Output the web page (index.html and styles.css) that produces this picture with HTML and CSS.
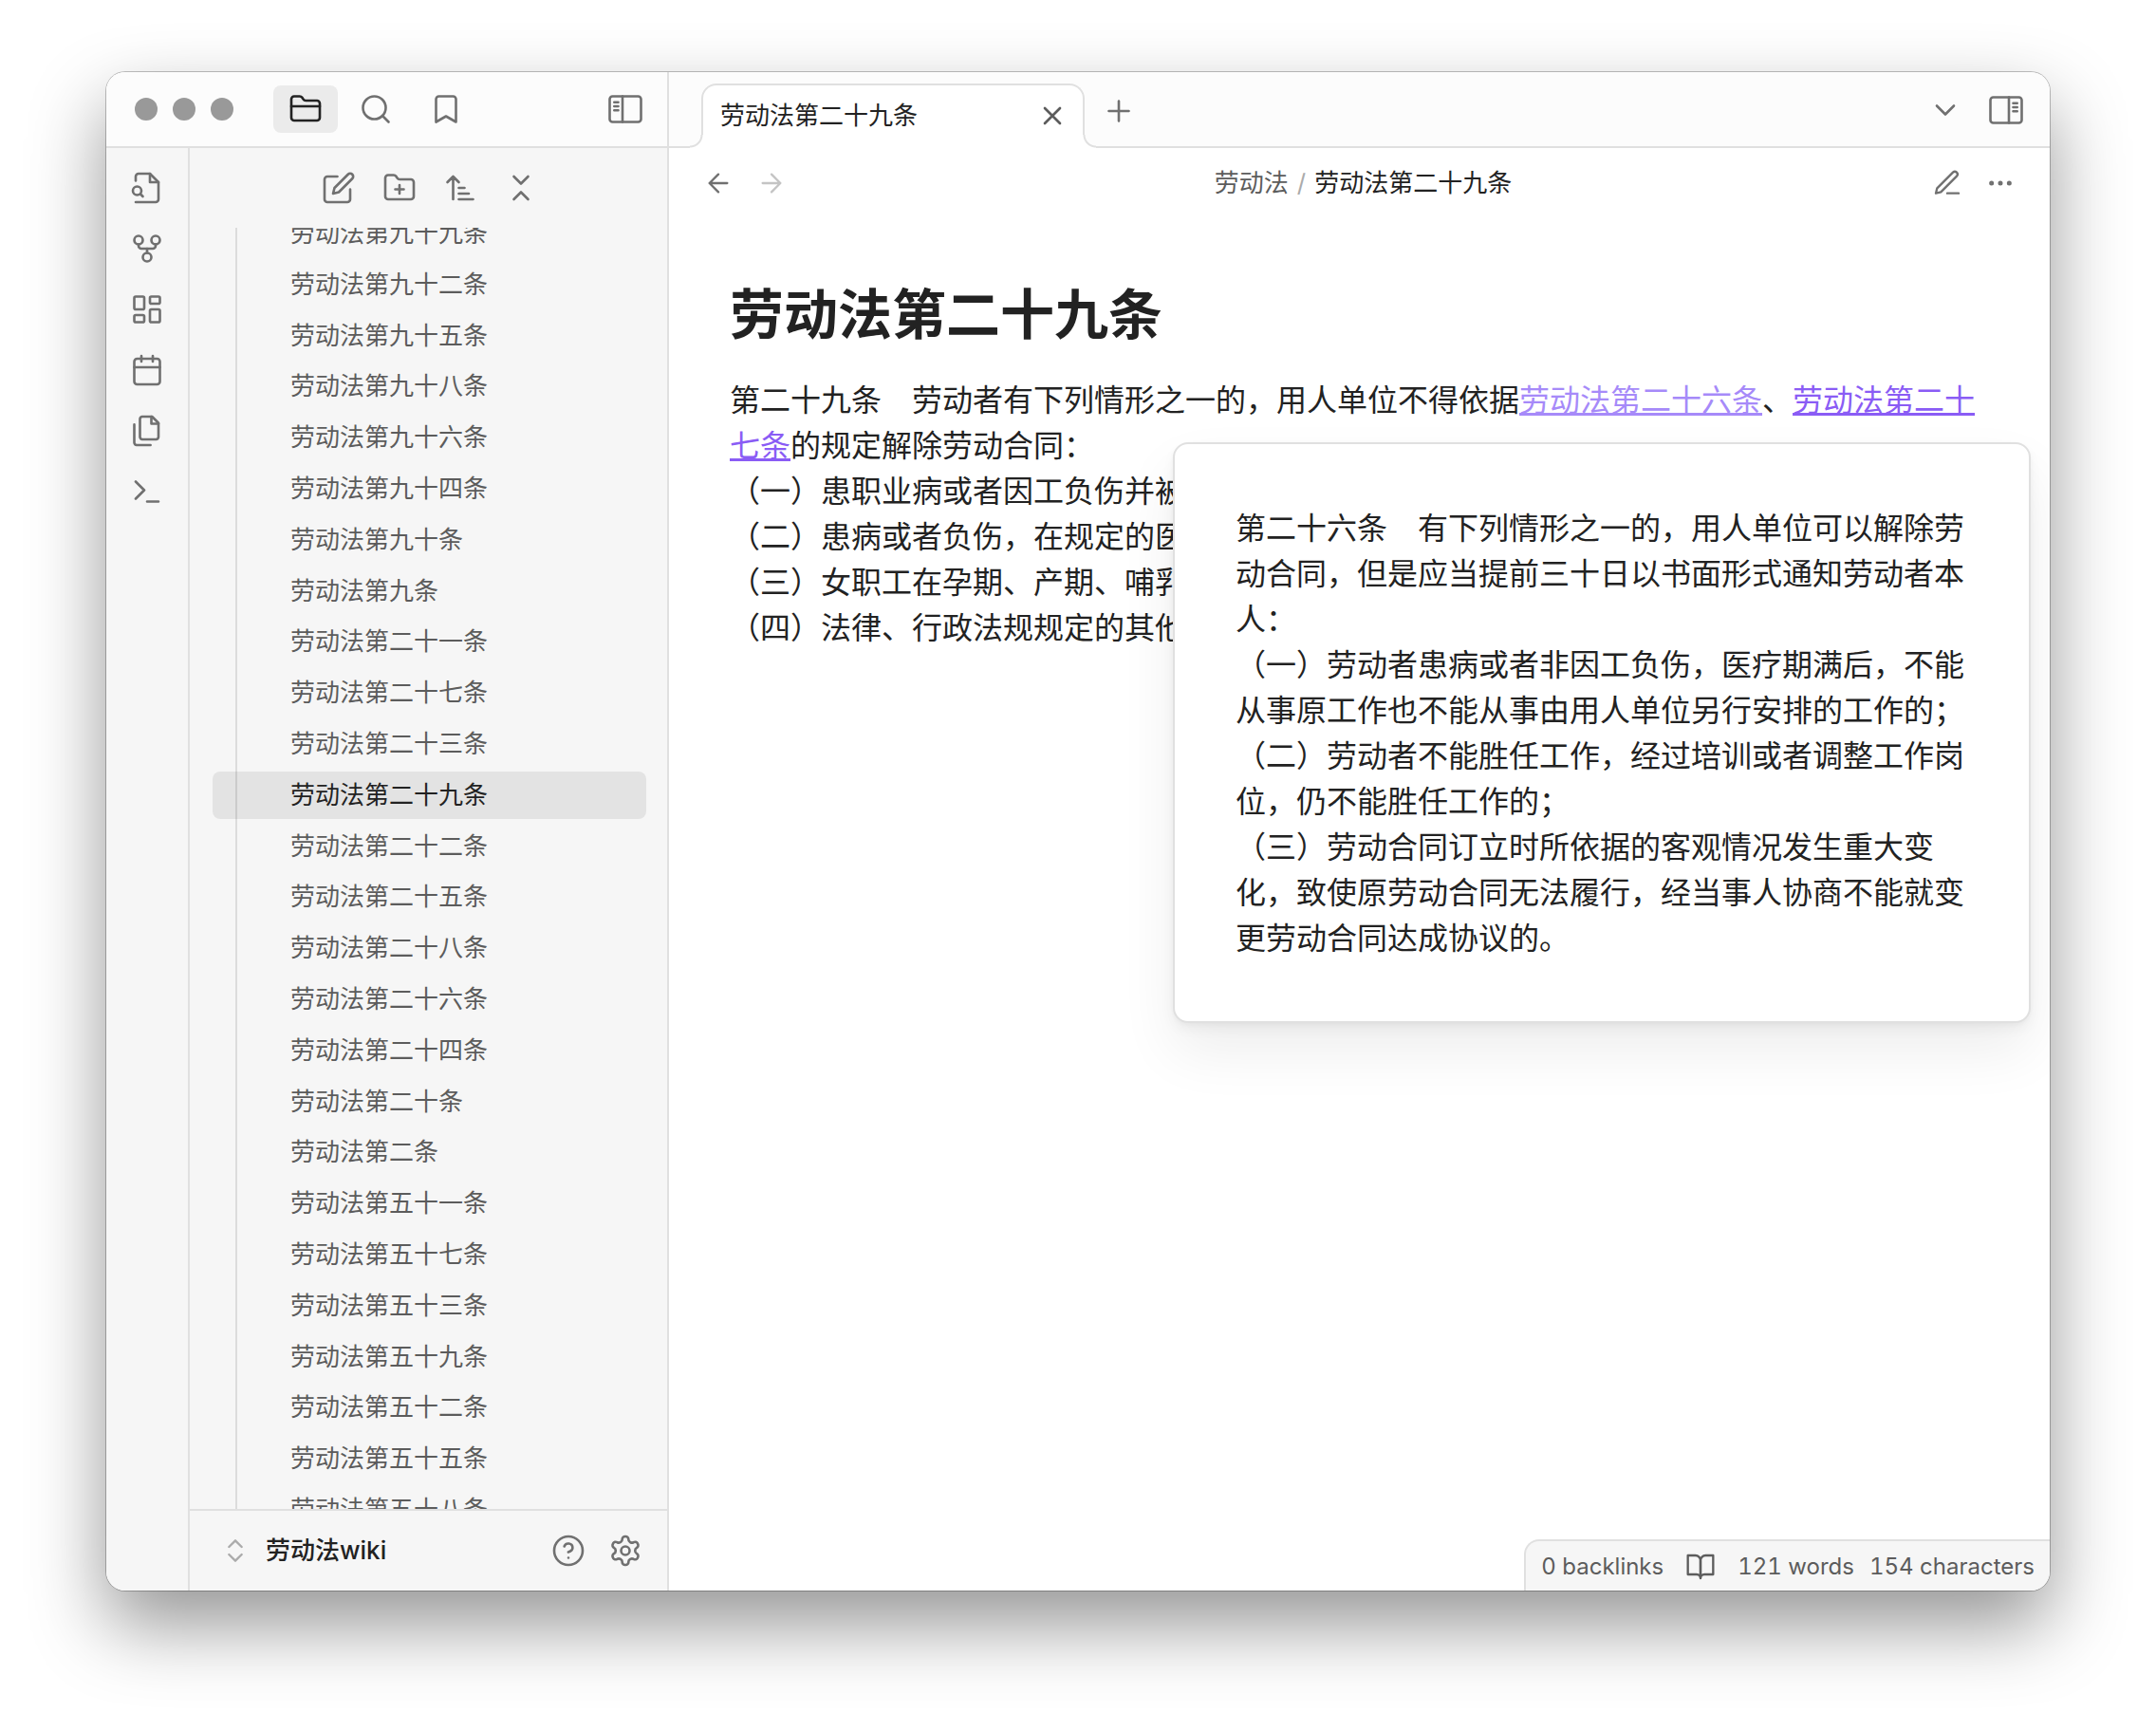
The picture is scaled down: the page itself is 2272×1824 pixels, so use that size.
FILE: index.html
```html
<!DOCTYPE html>
<html lang="zh-CN">
<head>
<meta charset="utf-8">
<title>劳动法第二十九条 - 劳动法wiki</title>
<link rel="stylesheet" href="styles.css">
</head>
<body>
<svg class="icon-defs" aria-hidden="true">
  <symbol id="i-folder" viewBox="0 0 24 24"><path d="M20 20a2 2 0 0 0 2-2V8a2 2 0 0 0-2-2h-7.9a2 2 0 0 1-1.69-.9L9.6 3.9A2 2 0 0 0 7.93 3H4a2 2 0 0 0-2 2v13a2 2 0 0 0 2 2Z"/><path d="M2 10h20"/></symbol>
  <symbol id="i-search" viewBox="0 0 24 24"><circle cx="11" cy="11" r="8"/><path d="m21 21-4.3-4.3"/></symbol>
  <symbol id="i-bookmark" viewBox="0 0 24 24"><path d="m19 21-7-4-7 4V5a2 2 0 0 1 2-2h10a2 2 0 0 1 2 2v16z"/></symbol>
  <symbol id="i-sidebar-left" viewBox="0 0 24 24"><rect x="1" y="3" width="22" height="18" rx="2"/><path d="M10 3v18M4.2 7.2h2.8M4.2 10h2.8M4.2 12.8h2.8"/></symbol>
  <symbol id="i-sidebar-right" viewBox="0 0 24 24"><rect x="1" y="3" width="22" height="18" rx="2"/><path d="M14 3v18M17 7.2h2.8M17 10h2.8M17 12.8h2.8"/></symbol>
  <symbol id="i-file-search" viewBox="0 0 24 24"><path d="M4 7V4a2 2 0 0 1 2-2h8l6 6v12a2 2 0 0 1-2 2H4"/><path d="M14 2v6h6"/><circle cx="5" cy="14" r="3"/><path d="m9 18-1.5-1.5"/></symbol>
  <symbol id="i-fork" viewBox="0 0 24 24"><circle cx="12" cy="18" r="3"/><circle cx="6" cy="6" r="3"/><circle cx="18" cy="6" r="3"/><path d="M18 9v1a2 2 0 0 1-2 2H8a2 2 0 0 1-2-2V9"/><path d="M12 12v3"/></symbol>
  <symbol id="i-dashboard" viewBox="0 0 24 24"><rect x="3" y="3" width="7" height="9" rx="1"/><rect x="14" y="3" width="7" height="5" rx="1"/><rect x="14" y="12" width="7" height="9" rx="1"/><rect x="3" y="16" width="7" height="5" rx="1"/></symbol>
  <symbol id="i-calendar" viewBox="0 0 24 24"><rect x="3" y="4" width="18" height="18" rx="2"/><path d="M16 2v4M8 2v4M3 10h18"/></symbol>
  <symbol id="i-files" viewBox="0 0 24 24"><path d="M15.5 2H8.6c-.4 0-.8.2-1.1.5-.3.3-.5.7-.5 1.1v12.8c0 .4.2.8.5 1.1.3.3.7.5 1.1.5h9.8c.4 0 .8-.2 1.1-.5.3-.3.5-.7.5-1.1V6.5L15.5 2z"/><path d="M3 7.6v12.8c0 .4.2.8.5 1.1.3.3.7.5 1.1.5h9.8"/><path d="M15 2v5h5"/></symbol>
  <symbol id="i-terminal" viewBox="0 0 24 24"><path d="m4 17 6-6-6-6M12 19h8"/></symbol>
  <symbol id="i-new-note" viewBox="0 0 24 24"><path d="M11 4H4a2 2 0 0 0-2 2v14a2 2 0 0 0 2 2h14a2 2 0 0 0 2-2v-7"/><path d="M18.5 2.5a2.12 2.12 0 0 1 3 3L12 15l-4 1 1-4Z"/></symbol>
  <symbol id="i-new-folder" viewBox="0 0 24 24"><path d="M4 20h16a2 2 0 0 0 2-2V8a2 2 0 0 0-2-2h-7.93a2 2 0 0 1-1.66-.9l-.82-1.2A2 2 0 0 0 7.93 3H4a2 2 0 0 0-2 2v13c0 1.1.9 2 2 2Z"/><path d="M12 10v6M9 13h6"/></symbol>
  <symbol id="i-sort" viewBox="0 0 24 24"><path d="m3 8 4-4 4 4M7 4v16M11 12h4M11 16h7M11 20h10"/></symbol>
  <symbol id="i-collapse" viewBox="0 0 24 24"><path d="m7 20 5-5 5 5M7 4l5 5 5-5"/></symbol>
  <symbol id="i-up-down" viewBox="0 0 24 24"><path d="m7 15 5 5 5-5M7 9l5-5 5 5"/></symbol>
  <symbol id="i-help" viewBox="0 0 24 24"><circle cx="12" cy="12" r="10"/><path d="M9.09 9a3 3 0 0 1 5.83 1c0 2-3 3-3 3M12 17h.01"/></symbol>
  <symbol id="i-settings" viewBox="0 0 24 24"><path d="M12.22 2h-.44a2 2 0 0 0-2 2v.18a2 2 0 0 1-1 1.73l-.43.25a2 2 0 0 1-2 0l-.15-.08a2 2 0 0 0-2.73.73l-.22.38a2 2 0 0 0 .73 2.73l.15.1a2 2 0 0 1 1 1.72v.51a2 2 0 0 1-1 1.74l-.15.09a2 2 0 0 0-.73 2.73l.22.38a2 2 0 0 0 2.73.73l.15-.08a2 2 0 0 1 2 0l.43.25a2 2 0 0 1 1 1.73V20a2 2 0 0 0 2 2h.44a2 2 0 0 0 2-2v-.18a2 2 0 0 1 1-1.73l.43-.25a2 2 0 0 1 2 0l.15.08a2 2 0 0 0 2.73-.73l.22-.39a2 2 0 0 0-.73-2.73l-.15-.08a2 2 0 0 1-1-1.74v-.5a2 2 0 0 1 1-1.74l.15-.09a2 2 0 0 0 .73-2.73l-.22-.38a2 2 0 0 0-2.73-.73l-.15.08a2 2 0 0 1-2 0l-.43-.25a2 2 0 0 1-1-1.73V4a2 2 0 0 0-2-2z"/><circle cx="12" cy="12" r="3"/></symbol>
  <symbol id="i-close" viewBox="0 0 24 24"><path d="M18 6 6 18M6 6l12 12"/></symbol>
  <symbol id="i-plus" viewBox="0 0 24 24"><path d="M5 12h14M12 5v14"/></symbol>
  <symbol id="i-chevron-down" viewBox="0 0 24 24"><path d="m6 9 6 6 6-6"/></symbol>
  <symbol id="i-back" viewBox="0 0 24 24"><path d="m12 19-7-7 7-7M19 12H5"/></symbol>
  <symbol id="i-forward" viewBox="0 0 24 24"><path d="M5 12h14M12 5l7 7-7 7"/></symbol>
  <symbol id="i-pen" viewBox="0 0 24 24"><path d="M12 20h9"/><path d="M16.5 3.5a2.12 2.12 0 0 1 3 3L7 19l-4 1 1-4Z"/></symbol>
  <symbol id="i-more" viewBox="0 0 24 24"><circle cx="12" cy="12" r="1"/><circle cx="19" cy="12" r="1"/><circle cx="5" cy="12" r="1"/></symbol>
  <symbol id="i-book" viewBox="0 0 24 24"><path d="M2 3h6a4 4 0 0 1 4 4v14a3 3 0 0 0-3-3H2z"/><path d="M22 3h-6a4 4 0 0 0-4 4v14a3 3 0 0 1 3-3h7z"/></symbol>
</svg>

<div class="window">
  <aside class="left">
    <header class="left-header">
      <div class="lights"><span></span><span></span><span></span></div>
      <div class="side-tabs">
        <button class="side-tab active" aria-label="文件列表"><svg class="icon"><use href="#i-folder"/></svg></button>
        <button class="side-tab" aria-label="搜索"><svg class="icon"><use href="#i-search"/></svg></button>
        <button class="side-tab" aria-label="书签"><svg class="icon"><use href="#i-bookmark"/></svg></button>
      </div>
      <button class="tool" aria-label="折叠左侧栏"><svg class="icon"><use href="#i-sidebar-left"/></svg></button>
    </header>
    <div class="left-body">
      <nav class="ribbon">
        <button class="tool" aria-label="快速切换"><svg class="icon"><use href="#i-file-search"/></svg></button>
        <button class="tool" aria-label="关系图谱"><svg class="icon"><use href="#i-fork"/></svg></button>
        <button class="tool" aria-label="白板"><svg class="icon"><use href="#i-dashboard"/></svg></button>
        <button class="tool" aria-label="日记"><svg class="icon"><use href="#i-calendar"/></svg></button>
        <button class="tool" aria-label="模板"><svg class="icon"><use href="#i-files"/></svg></button>
        <button class="tool" aria-label="命令面板"><svg class="icon"><use href="#i-terminal"/></svg></button>
      </nav>
      <section class="explorer">
        <div class="explorer-tools">
          <button class="tool" aria-label="新建笔记"><svg class="icon"><use href="#i-new-note"/></svg></button>
          <button class="tool" aria-label="新建文件夹"><svg class="icon"><use href="#i-new-folder"/></svg></button>
          <button class="tool" aria-label="排序"><svg class="icon"><use href="#i-sort"/></svg></button>
          <button class="tool" aria-label="全部折叠"><svg class="icon"><use href="#i-collapse"/></svg></button>
        </div>
        <div class="file-scroll">
          <ul class="files">
            <li><a href="#">劳动法第九十九条</a></li>
            <li><a href="#">劳动法第九十二条</a></li>
            <li><a href="#">劳动法第九十五条</a></li>
            <li><a href="#">劳动法第九十八条</a></li>
            <li><a href="#">劳动法第九十六条</a></li>
            <li><a href="#">劳动法第九十四条</a></li>
            <li><a href="#">劳动法第九十条</a></li>
            <li><a href="#">劳动法第九条</a></li>
            <li><a href="#">劳动法第二十一条</a></li>
            <li><a href="#">劳动法第二十七条</a></li>
            <li><a href="#">劳动法第二十三条</a></li>
            <li><a href="#" class="current">劳动法第二十九条</a></li>
            <li><a href="#">劳动法第二十二条</a></li>
            <li><a href="#">劳动法第二十五条</a></li>
            <li><a href="#">劳动法第二十八条</a></li>
            <li><a href="#">劳动法第二十六条</a></li>
            <li><a href="#">劳动法第二十四条</a></li>
            <li><a href="#">劳动法第二十条</a></li>
            <li><a href="#">劳动法第二条</a></li>
            <li><a href="#">劳动法第五十一条</a></li>
            <li><a href="#">劳动法第五十七条</a></li>
            <li><a href="#">劳动法第五十三条</a></li>
            <li><a href="#">劳动法第五十九条</a></li>
            <li><a href="#">劳动法第五十二条</a></li>
            <li><a href="#">劳动法第五十五条</a></li>
            <li><a href="#">劳动法第五十八条</a></li>
          </ul>
        </div>
        <footer class="vault">
          <button class="vault-name"><svg class="icon small"><use href="#i-up-down"/></svg>劳动法wiki</button>
          <button class="tool" aria-label="帮助"><svg class="icon"><use href="#i-help"/></svg></button>
          <button class="tool" aria-label="设置"><svg class="icon"><use href="#i-settings"/></svg></button>
        </footer>
      </section>
    </div>
  </aside>

  <main class="main">
    <header class="tabs">
      <div class="tab">
        <span class="tab-title">劳动法第二十九条</span>
        <button class="close" aria-label="关闭"><svg class="icon small"><use href="#i-close"/></svg></button>
      </div>
      <button class="tool new-tab" aria-label="新标签页"><svg class="icon"><use href="#i-plus"/></svg></button>
      <div class="tabs-end">
        <button class="tool" aria-label="标签页列表"><svg class="icon"><use href="#i-chevron-down"/></svg></button>
        <button class="tool" aria-label="展开右侧栏"><svg class="icon"><use href="#i-sidebar-right"/></svg></button>
      </div>
    </header>
    <div class="view-header">
      <div class="view-actions">
        <button class="action" aria-label="后退"><svg class="icon small"><use href="#i-back"/></svg></button>
        <button class="action" aria-label="前进" disabled><svg class="icon small"><use href="#i-forward"/></svg></button>
      </div>
      <nav class="crumbs"><a href="#">劳动法</a><span>/</span><strong>劳动法第二十九条</strong></nav>
      <div class="view-actions">
        <button class="action" aria-label="编辑"><svg class="icon small"><use href="#i-pen"/></svg></button>
        <button class="action" aria-label="更多选项"><svg class="icon small"><use href="#i-more"/></svg></button>
      </div>
    </div>
    <article class="note">
      <h1>劳动法第二十九条</h1>
      <p>第二十九条　劳动者有下列情形之一的，用人单位不得依据<a href="#" class="hovered">劳动法第二十六条</a>、<a href="#">劳动法第二十七条</a>的规定解除劳动合同：<br>
      （一）患职业病或者因工负伤并被确认丧失或者部分丧失劳动能力的；<br>
      （二）患病或者负伤，在规定的医疗期内的；<br>
      （三）女职工在孕期、产期、哺乳期内的；<br>
      （四）法律、行政法规规定的其他情形。</p>
    </article>
    <aside class="popover">
      <p>第二十六条　有下列情形之一的，用人单位可以解除劳动合同，但是应当提前三十日以书面形式通知劳动者本人：<br>
      （一）劳动者患病或者非因工负伤，医疗期满后，不能从事原工作也不能从事由用人单位另行安排的工作的；<br>
      （二）劳动者不能胜任工作，经过培训或者调整工作岗位，仍不能胜任工作的；<br>
      （三）劳动合同订立时所依据的客观情况发生重大变化，致使原劳动合同无法履行，经当事人协商不能就变更劳动合同达成协议的。</p>
    </aside>
    <footer class="status">
      <span>0 backlinks</span>
      <button class="status-icon" aria-label="阅读视图"><svg class="icon small"><use href="#i-book"/></svg></button>
      <span>121 words</span>
      <span>154 characters</span>
    </footer>
  </main>
</div>
</body>
</html>
```
FILE: styles.css
```css
* {
  box-sizing: border-box;
}

:root {
  --line: #e0e0e0;
  --bar: #fcfcfc;
  --side: #f6f6f6;
  --text: #222;
  --muted: #5c5c5c;
  --icon: #707070;
  --faint: #ababab;
  --link: #8a5cf5;
  --link-hover: #a68af9;
}

body {
  margin: 0;
  height: 100vh;
  padding: 76px 112px 148px;
  display: flex;
  background: #fff;
  color: var(--text);
  font-family: Inter, "Noto Sans CJK SC", sans-serif;
  font-size: 26px;
  line-height: 34px;
  text-spacing-trim: space-all;
}

.icon-defs {
  position: absolute;
  width: 0;
  height: 0;
}

button {
  margin: 0;
  padding: 0;
  border: 0;
  background: none;
  color: var(--icon);
  font: inherit;
  display: flex;
  align-items: center;
  justify-content: center;
}

a {
  color: inherit;
  text-decoration: none;
}

.icon {
  width: 36px;
  height: 36px;
  flex: none;
  fill: none;
  stroke: currentColor;
  stroke-width: 1.75;
  stroke-linecap: round;
  stroke-linejoin: round;
  overflow: visible;
}

.icon.small {
  width: 32px;
  height: 32px;
}

.tool {
  width: 60px;
  height: 60px;
}

.window {
  flex: 1;
  min-width: 0;
  display: flex;
  overflow: hidden;
  border-radius: 20px;
  background: #fff;
  box-shadow: 0 0 0 1px rgba(0, 0, 0, .24), 0 36px 80px rgba(0, 0, 0, .42);
}

/* left side */

.left {
  flex: none;
  width: 593px;
  display: flex;
  flex-direction: column;
  border-right: 2px solid var(--line);
  background: var(--side);
}

.left-header {
  height: 80px;
  padding: 0 14px 0 30px;
  display: flex;
  align-items: center;
  border-bottom: 2px solid var(--line);
  background: var(--bar);
}

.lights {
  display: flex;
  gap: 16px;
}

.lights span {
  width: 24px;
  height: 24px;
  border-radius: 50%;
  background: #999;
}

.side-tabs {
  flex: 1;
  display: flex;
  gap: 6px;
  padding-left: 42px;
}

.side-tab {
  width: 68px;
  height: 50px;
  border-radius: 8px;
}

.side-tab.active {
  background: #ebebeb;
  color: var(--text);
}

.left-body {
  flex: 1;
  min-height: 0;
  display: flex;
}

.ribbon {
  width: 88px;
  padding-top: 12px;
  display: flex;
  flex-direction: column;
  align-items: center;
  gap: 4px;
  border-right: 2px solid var(--line);
}

.explorer {
  flex: 1;
  min-width: 0;
  display: flex;
  flex-direction: column;
}

.explorer-tools {
  height: 84px;
  padding-left: 2px;
  display: flex;
  align-items: center;
  justify-content: center;
  gap: 4px;
}

.file-scroll {
  flex: 1;
  min-height: 0;
  padding: 0 22px 0 24px;
  display: flex;
  flex-direction: column;
  overflow: hidden;
  background: linear-gradient(#dcdcdc, #dcdcdc) 48px 0 / 2px 100% no-repeat;
}

/* the list is scrolled a little, so both its ends run out of the box */
.files {
  flex: 1 0 auto;
  margin: -19px 0 -26px;
  padding: 0;
  display: flex;
  flex-direction: column;
  justify-content: space-between;
  list-style: none;
}

.files a {
  display: block;
  padding: 8px 16px 8px 82px;
  border-radius: 8px;
  color: var(--muted);
}

.files .current {
  background: rgba(0, 0, 0, .075);
  color: var(--text);
}

.vault {
  height: 86px;
  padding: 0 14px 0 32px;
  display: flex;
  align-items: center;
  border-top: 2px solid var(--line);
}

.vault-name {
  flex: 1;
  justify-content: flex-start;
  gap: 16px;
  color: var(--text);
  font-weight: 500;
}

.vault-name .icon {
  color: var(--faint);
}

/* main side */

.main {
  position: relative;
  flex: 1;
  min-width: 0;
  display: flex;
  flex-direction: column;
}

.tabs {
  height: 80px;
  padding: 12px 16px 0 34px;
  display: flex;
  background: linear-gradient(var(--line), var(--line)) bottom / 100% 2px no-repeat var(--bar);
}

.tab {
  position: relative;
  width: 404px;
  padding: 0 16px 3px 18px;
  display: flex;
  align-items: center;
  justify-content: space-between;
  border: 2px solid var(--line);
  border-bottom: 0;
  border-radius: 16px 16px 0 0;
  background: #fff;
}

.tab::before,
.tab::after {
  content: "";
  position: absolute;
  bottom: 0;
  width: 14px;
  height: 14px;
}

.tab::before {
  right: 100%;
  background: radial-gradient(circle at 0 0, var(--bar) 11px, var(--line) 12px, var(--line) 13px, #fff 14px);
}

.tab::after {
  left: 100%;
  background: radial-gradient(circle at 100% 0, var(--bar) 11px, var(--line) 12px, var(--line) 13px, #fff 14px);
}

.close {
  color: var(--muted);
}

.close .icon {
  stroke-width: 2;
}

.new-tab {
  height: 58px;
  margin-left: 6px;
}

.tabs-end {
  flex: 1;
  height: 56px;
  display: flex;
  align-items: center;
  justify-content: flex-end;
  gap: 4px;
}

.view-header {
  height: 74px;
  padding: 0 24px;
  display: flex;
  align-items: center;
}

.view-actions {
  display: flex;
}

.action {
  width: 56px;
  height: 48px;
}

.action:disabled {
  color: #c4c4c4;
}

.crumbs {
  flex: 1;
  padding-left: 8px;
  display: flex;
  justify-content: center;
  gap: 9px;
  color: var(--muted);
}

.crumbs span {
  color: var(--faint);
}

.crumbs strong {
  color: var(--text);
  font-weight: 400;
}

.note {
  flex: 1;
  padding: 66px 64px;
}

h1 {
  margin: 0 0 30px;
  font-size: 57px;
  line-height: 72px;
  font-weight: 700;
}

p {
  margin: 0;
  font-size: 32px;
  line-height: 48px;
}

p a {
  color: var(--link);
  text-decoration: underline;
  text-decoration-thickness: 3px;
  text-decoration-skip-ink: none;
  text-underline-offset: 2px;
}

p .hovered {
  color: var(--link-hover);
}

.popover {
  position: absolute;
  top: 390px;
  right: 20px;
  width: 904px;
  padding: 65px 64px 63px;
  border: 2px solid var(--line);
  border-radius: 16px;
  background: #fff;
  box-shadow: 0 2px 4px rgba(0, 0, 0, .03), 0 7px 14px rgba(0, 0, 0, .04), 0 30px 60px rgba(0, 0, 0, .07);
}

.status {
  align-self: flex-end;
  height: 54px;
  padding: 2px 16px 0;
  display: flex;
  align-items: center;
  gap: 16px;
  border: 2px solid var(--line);
  border-width: 2px 0 0 2px;
  border-radius: 16px 0 0 0;
  background: var(--side);
  color: var(--muted);
  font-size: 24px;
  font-variant-numeric: tabular-nums;
}

.status-icon {
  padding: 0 7px;
  color: inherit;
}
```
